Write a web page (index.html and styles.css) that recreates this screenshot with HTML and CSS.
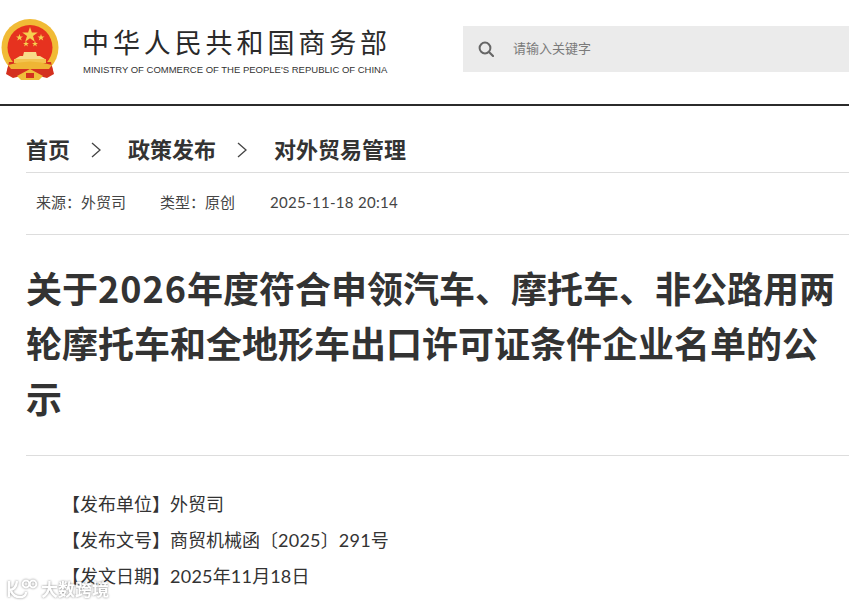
FILE: index.html
```html
<!DOCTYPE html>
<html lang="zh-CN">
<head>
<meta charset="utf-8">
<title>中华人民共和国商务部</title>
<link rel="stylesheet" href="styles.css">
</head>
<body>
<header class="site-header">
  <div class="brand">
    <svg class="emblem" viewBox="0 19 60 62" width="60" height="62" aria-hidden="true">
      <path d="M9 62 L6 74 L13 78 L21 76 L30 79 L39 76 L47 78 L54 74 L51 62 Z" fill="#d4301f"/>
      <circle cx="30" cy="47.5" r="28.5" fill="#f1bb36"/>
      <circle cx="30" cy="47.5" r="22.5" fill="#e6321f"/>
      <path d="M9 62 L7 72 L16 77 L24 73 L30 70 L36 73 L44 77 L53 72 L51 62 Z" fill="#d4301f"/>
      <polygon points="30,27 31.9,32.6 37.8,32.6 33,36.1 34.8,41.7 30,38.2 25.2,41.7 27,36.1 22.2,32.6 28.1,32.6" fill="#f6cf4f"/>
      <polygon points="19.5,34 20.4,36.5 23,36.5 20.9,38.1 21.7,40.6 19.5,39.1 17.3,40.6 18.1,38.1 16,36.5 18.6,36.5" fill="#f6cf4f"/>
      <polygon points="41,34 41.9,36.5 44.5,36.5 42.4,38.1 43.2,40.6 41,39.1 38.8,40.6 39.6,38.1 37.5,36.5 40.1,36.5" fill="#f6cf4f"/>
      <polygon points="26,41 26.8,43 29,43 27.2,44.3 27.9,46.4 26,45.1 24.1,46.4 24.8,44.3 23,43 25.2,43" fill="#f6cf4f"/>
      <polygon points="35,41 35.8,43 38,43 36.2,44.3 36.9,46.4 35,45.1 33.1,46.4 33.8,44.3 32,43 34.2,43" fill="#f6cf4f"/>
      <path d="M24 52 H36 L37 56 H40 L45 59 H15 L20 56 H23 Z" fill="#f8dc88"/>
      <rect x="14" y="59" width="32" height="4" fill="#f3c44f"/>
      <path d="M8 65 Q30 58 52 65 L49 69 H11 Z" fill="#efb534"/>
      <path d="M17 76 L30 69 L43 76 L39 80 H21 Z" fill="#f0bd3a"/>
      <path d="M26 73 H34 V78 H26 Z" fill="#d4301f"/>
    </svg>
    <div class="brand-text">
      <div class="brand-cn">中华人民共和国商务部</div>
      <div class="brand-en">MINISTRY OF COMMERCE OF THE PEOPLE'S REPUBLIC OF CHINA</div>
    </div>
  </div>
  <div class="search">
    <svg class="search-icon" viewBox="0 0 16 16" width="16" height="16" aria-hidden="true">
      <circle cx="7" cy="7" r="5.4" fill="none" stroke="#666" stroke-width="2"/>
      <line x1="11" y1="11" x2="15" y2="15" stroke="#666" stroke-width="2.2" stroke-linecap="round"/>
    </svg>
    <span class="search-text">请输入关键字</span>
  </div>
</header>

<main class="article">
  <nav class="crumbs">
    <span>首页</span>
    <svg class="chev" viewBox="0 0 12 18" width="12" height="18" aria-hidden="true"><path d="M2 2 L10 9 L2 16" fill="none" stroke="#444" stroke-width="1.3"/></svg>
    <span>政策发布</span>
    <svg class="chev" viewBox="0 0 12 18" width="12" height="18" aria-hidden="true"><path d="M2 2 L10 9 L2 16" fill="none" stroke="#444" stroke-width="1.3"/></svg>
    <span>对外贸易管理</span>
  </nav>
  <div class="meta">
    <span>来源：外贸司</span>
    <span>类型：原创</span>
    <span class="date">2025-11-18 20:14</span>
  </div>
  <h1 class="title">关于<span class="num">2026</span>年度符合申领汽车、摩托车、非公路用两轮摩托车和全地形车出口许可证条件企业名单的公示</h1>
  <div class="body">
    <p>【发布单位】外贸司</p>
    <p>【发布文号】商贸机械函〔<span class="digits">2025</span>〕<span class="digits">291</span>号</p>
    <p>【发文日期】<span class="digits">2025</span>年<span class="digits">11</span>月<span class="digits">18</span>日</p>
  </div>
</main>

<div class="watermark">
  <svg viewBox="0 0 32 22" width="32" height="22" aria-hidden="true">
    <path d="M3 3 V19 M3 12 Q10 12 11 3 M5 13 Q8 20 16 19 Q20 18 20 14" fill="none" stroke="#fff" stroke-width="2.4"/>
    <circle cx="20" cy="6" r="3.4" fill="none" stroke="#fff" stroke-width="2"/>
    <circle cx="27" cy="6" r="3.4" fill="none" stroke="#fff" stroke-width="2"/>
  </svg>
  <span>大数跨境</span>
</div>
</body>
</html>
```
FILE: styles.css
```css
* { box-sizing: border-box; }
html, body { margin: 0; padding: 0; }
body {
  width: 849px;
  height: 604px;
  overflow: hidden;
  background: #fff;
  color: #333;
  font-family: "Noto Sans CJK SC", "Noto Sans", sans-serif;
  position: relative;
}
.site-header {
  height: 106px;
  border-bottom: 2px solid #2b2b2b;
  display: flex;
  justify-content: space-between;
  align-items: flex-start;
}
.brand {
  display: flex;
  align-items: flex-start;
  padding-top: 19px;
}
.emblem { display: block; }
.brand-text { margin-left: 23px; }
.brand-cn {
  font-size: 27px;
  font-weight: 400;
  line-height: 30px;
  letter-spacing: 3.9px;
  margin-top: 8px;
  margin-left: -1px;
  color: #2a2a2a;
  white-space: nowrap;
}
.brand-en {
  font-family: "Liberation Sans", Arial, sans-serif;
  font-size: 9.5px;
  line-height: 12px;
  margin-top: 7px;
  color: #333;
  white-space: nowrap;
}
.search {
  width: 386px;
  height: 46px;
  margin-top: 26px;
  background: #ebebeb;
  display: flex;
  align-items: center;
  padding-left: 15px;
}
.search-icon { display: block; }
.search-text {
  margin-left: 19px;
  padding-bottom: 3px;
  font-size: 13px;
  color: #7a7a7a;
}
.article { padding: 0 0 0 26px; }
.crumbs {
  height: 67px;
  padding-top: 21px;
  padding-bottom: 3px;
  display: flex;
  align-items: center;
  border-bottom: 1px solid #ddd;
  font-size: 22px;
  font-weight: 700;
  color: #333;
}
.chev { margin: 4px 26px 0 20px; }
.meta {
  height: 62px;
  border-bottom: 1px solid #ddd;
  display: flex;
  align-items: center;
  gap: 34px;
  padding-left: 10px;
  padding-bottom: 4px;
  font-size: 15px;
  color: #444;
}
.date {
  font-family: "Lato", "Noto Sans CJK SC", sans-serif;
  letter-spacing: .3px;
  font-size: 15px;
  margin-left: 1px;
}
.title {
  margin: 0;
  padding: 25px 0 30px;
  font-size: 36px;
  font-weight: 700;
  line-height: 55px;
  color: #333;
  border-bottom: 1px solid #ddd;
}
.num { letter-spacing: 1px; }
.body { padding-top: 29px; font-size: 18px; color: #333; }
.body p { margin: 0 0 0 36px; line-height: 36px; height: 36px; }
.digits { font-family: "Lato", "Noto Sans CJK SC", sans-serif; letter-spacing: .25px; }
.watermark {
  position: absolute;
  left: 6px;
  top: 576px;
  display: flex;
  align-items: center;
  gap: 3px;
  color: #fff;
  font-size: 17px;
  font-weight: 700;
  opacity: .9;
  filter: drop-shadow(0 0 1px rgba(90,90,90,.8));
}
```
